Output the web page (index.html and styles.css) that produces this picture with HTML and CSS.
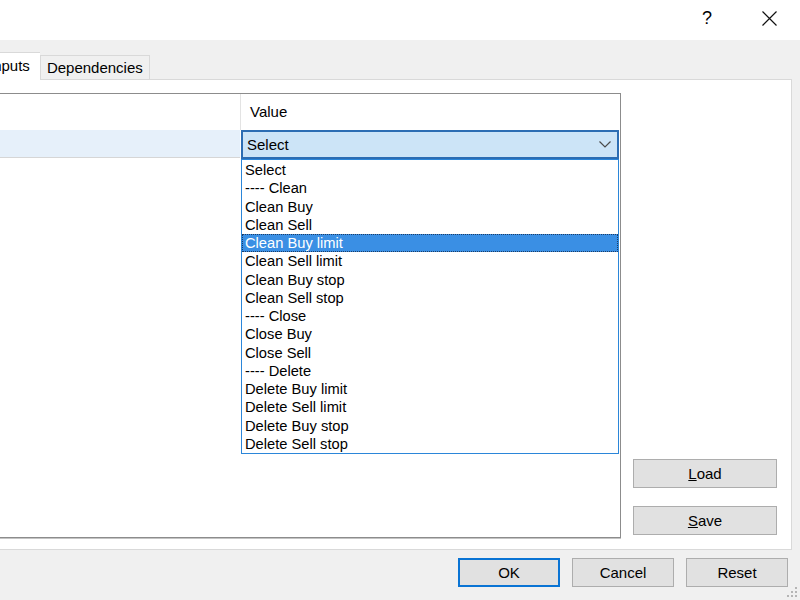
FILE: index.html
```html
<!DOCTYPE html>
<html lang="en">
<head>
  <meta charset="UTF-8" />
  <title>Expert properties</title>
  <link rel="stylesheet" href="styles.css">
</head>
<body>
  <div class="titlebar">
    <button class="cap-btn">?</button>
    <button class="cap-btn">
      <svg width="15" height="15" viewBox="0 0 15 15"><path d="M0.5 0.5L14.5 14.5M14.5 0.5L0.5 14.5" stroke="#111" stroke-width="1.2" fill="none"/></svg>
    </button>
  </div>

  <div class="tabs">
    <div class="tab active">Inputs</div>
    <div class="tab">Dependencies</div>
  </div>

  <div class="tabpage">
    <div class="grid">
      <div class="grid-head">
        <div class="cell name"></div>
        <div class="cell value">Value</div>
      </div>
      <div class="grid-row current">
        <div class="cell name"></div>
        <div class="cell value">
          <div class="combo">
            <span>Select</span>
            <svg width="12" height="7" viewBox="0 0 12 7"><path d="M0.5 0.5L6 6L11.5 0.5" stroke="#4a4a4a" stroke-width="1.2" fill="none"/></svg>
          </div>
        </div>
      </div>

      <ul class="dropdown">
        <li>Select</li>
        <li>---- Clean</li>
        <li>Clean Buy</li>
        <li>Clean Sell</li>
        <li class="hover">Clean Buy limit</li>
        <li>Clean Sell limit</li>
        <li>Clean Buy stop</li>
        <li>Clean Sell stop</li>
        <li>---- Close</li>
        <li>Close Buy</li>
        <li>Close Sell</li>
        <li>---- Delete</li>
        <li>Delete Buy limit</li>
        <li>Delete Sell limit</li>
        <li>Delete Buy stop</li>
        <li>Delete Sell stop</li>
      </ul>
    </div>

    <div class="side">
      <button class="btn"><u>L</u>oad</button>
      <button class="btn"><u>S</u>ave</button>
    </div>
  </div>

  <div class="footer">
    <button class="btn default">OK</button>
    <button class="btn">Cancel</button>
    <button class="btn">Reset</button>
    <svg class="grip" width="12" height="12" viewBox="0 0 12 12">
      <rect x="9" y="1" width="2" height="2" fill="#b5b5b5"/>
      <rect x="5" y="5" width="2" height="2" fill="#b5b5b5"/>
      <rect x="9" y="5" width="2" height="2" fill="#b5b5b5"/>
      <rect x="1" y="9" width="2" height="2" fill="#b5b5b5"/>
      <rect x="5" y="9" width="2" height="2" fill="#b5b5b5"/>
      <rect x="9" y="9" width="2" height="2" fill="#b5b5b5"/>
    </svg>
  </div>
</body>
</html>
```

FILE: styles.css
```css
* {
  box-sizing: border-box;
}
body {
  margin: 0;
  width: 800px;
  height: 600px;
  overflow: hidden;
  background: #f0f0f0;
  font-family: "Liberation Sans", Arial, sans-serif;
  font-size: 15px;
  color: #000;
  position: relative;
}
button {
  font-family: inherit;
  font-size: 15px;
  color: #000;
}

/* caption */
.titlebar {
  height: 40px;
  background: #fff;
  display: flex;
  justify-content: flex-end;
}
.cap-btn {
  width: 62px;
  height: 40px;
  border: none;
  background: none;
  padding: 0;
  font-size: 18px;
  display: flex;
  align-items: center;
  justify-content: center;
  padding-bottom: 3px;
}

/* tab strip */
.tabs {
  height: 39px;
  display: flex;
  align-items: flex-end;
  margin-left: -23px;
  position: relative;
  z-index: 1;
}
.tab {
  height: 24px;
  padding: 0 6px 0 6px;
  line-height: 23px;
  background: #f0f0f0;
  border: 1px solid #d9d9d9;
  border-bottom: none;
}
.tab.active {
  height: 28px;
  padding: 0 10px 0 11px;
  line-height: 26px;
  background: #fff;
  margin-bottom: -1px;
  border-right: none;
}

/* tab page */
.tabpage {
  height: 471px;
  margin: 0 8px 0 -1px;
  padding: 13px 0 0 1px;
  background: #fff;
  border: 1px solid #d9d9d9;
  border-left: none;
  display: flex;
  align-items: flex-start;
  gap: 12px;
}
.grid {
  position: relative;
  width: 621px;
  height: 445px;
  border: 1px solid #8c8c8c;
  border-left: none;
  box-shadow: 0 1px 0 #c4c4c4;
}
.grid-head,
.grid-row {
  display: flex;
}
.grid-head {
  height: 36px;
}
.grid-head .value {
  border-left: 1px solid #e3e3e3;
  padding-left: 9px;
  line-height: 36px;
}
.cell.name {
  width: 240px;
}
.cell.value {
  flex: 1;
}
.grid-row {
  height: 28px;
}
.grid-row.current .name {
  background: #e6f0fa;
  height: 28px;
  border-bottom: 1px solid #d6d6d6;
}
.grid-row .value {
  padding-left: 1px;
}
.combo {
  width: 378px;
  height: 29px;
  background: #cce4f7;
  border: 2px solid #2c6db3;
  display: flex;
  align-items: center;
  justify-content: space-between;
  padding: 0 6px 1px 4px;
}

/* open list of the combo */
.dropdown {
  position: absolute;
  left: 241px;
  top: 65px;
  width: 378px;
  height: 295px;
  margin: 0;
  padding: 1px 0 0;
  list-style: none;
  background: #fff;
  border: 1px solid #2b86d9;
  font-size: 14.7px;
}
.dropdown li {
  height: 18.25px;
  line-height: 18.25px;
  padding-left: 3px;
  white-space: nowrap;
}
.dropdown li.hover {
  background: #3a8fe4;
  color: #fff;
  outline: 1px dotted #1d3d66;
  outline-offset: -1px;
}

/* Load / Save */
.side {
  width: 144px;
  height: 445px;
  display: flex;
  flex-direction: column;
  justify-content: flex-end;
  gap: 18px;
  padding-bottom: 3px;
}
.btn {
  height: 29px;
  background: #e1e1e1;
  border: 1px solid #adadad;
  padding: 0;
}
.side .btn {
  height: 29px;
}

/* dialog buttons */
.footer {
  height: 50px;
  display: flex;
  justify-content: flex-end;
  gap: 12px;
  padding: 8px 12px 0 0;
}
.footer .btn {
  width: 102px;
}
.btn.default {
  border: 2px solid #0a74d4;
}
.grip {
  position: absolute;
  right: 2px;
  bottom: 2px;
}
```
